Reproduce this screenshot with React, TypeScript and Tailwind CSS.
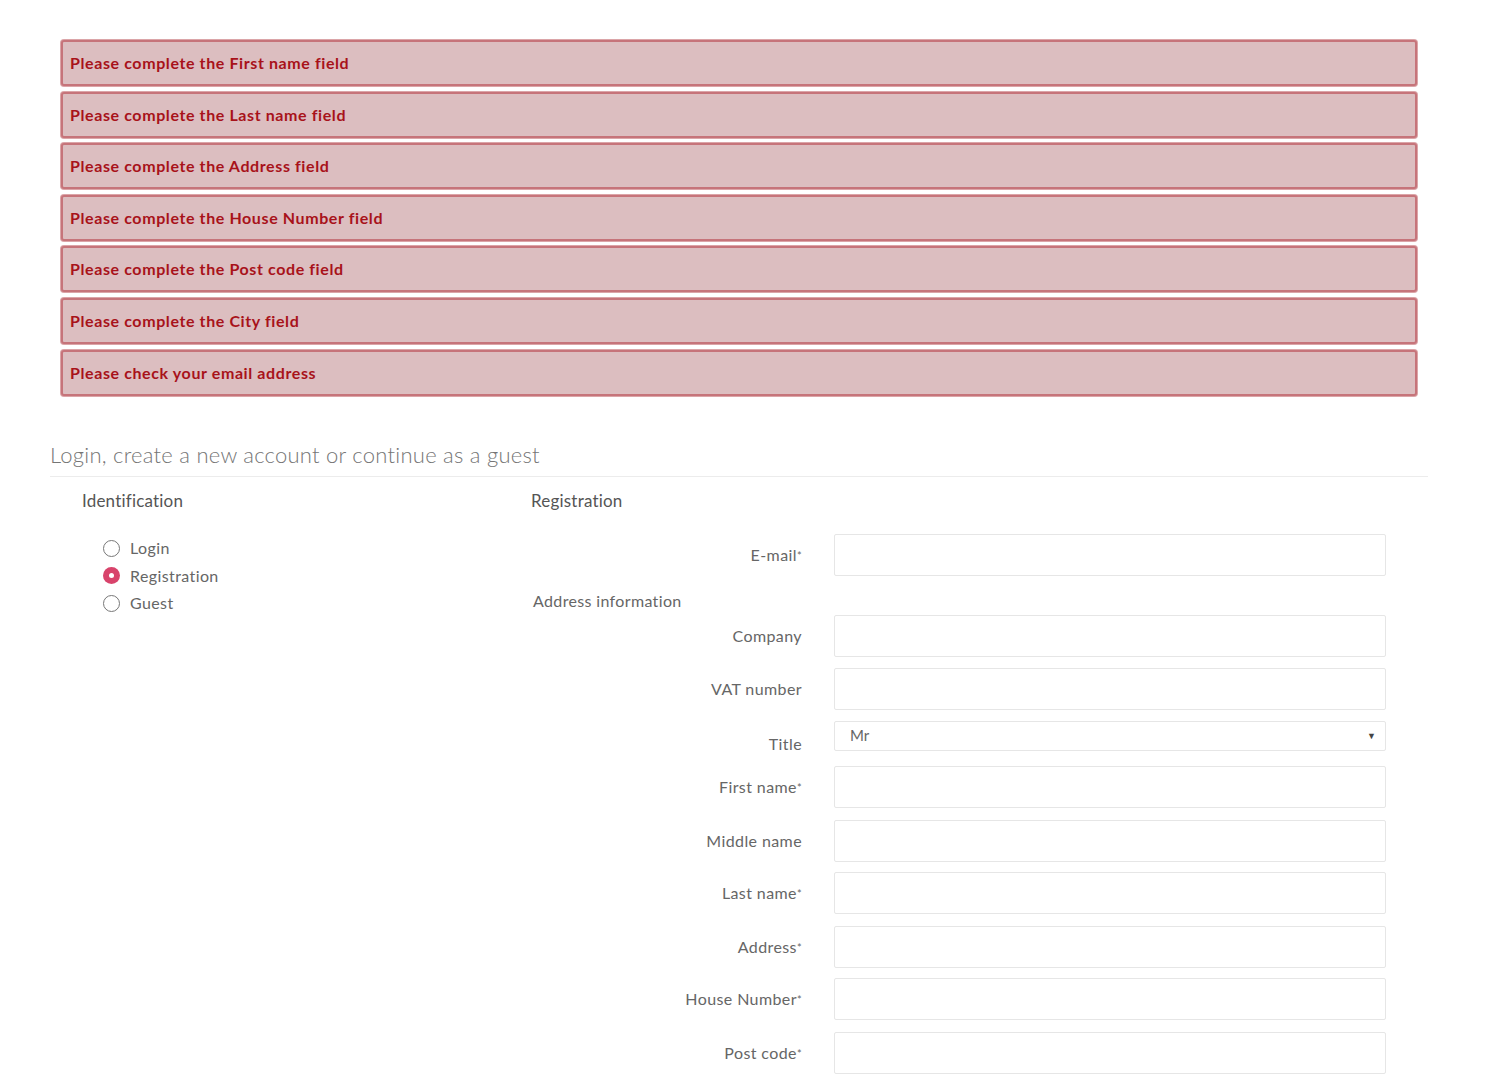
import React from "react";

const errors = [
  "Please complete the First name field",
  "Please complete the Last name field",
  "Please complete the Address field",
  "Please complete the House Number field",
  "Please complete the Post code field",
  "Please complete the City field",
  "Please check your email address",
];

const options = [
  { label: "Login", checked: false },
  { label: "Registration", checked: true },
  { label: "Guest", checked: false },
];

interface FieldRowProps {
  label: string;
  required?: boolean;
  className?: string;
}

const FieldRow = ({ label, required, className }: FieldRowProps) => (
  <div className={`flex items-center ${className ?? ""}`}>
    <label className="w-[271px] text-right text-[16px] tracking-[0.4px] text-[#666]">
      {label}
      {required && <sup className="text-[11px] relative -top-[1px]">*</sup>}
    </label>
    <input
      type="text"
      className="ml-[32px] w-[552px] h-[42px] border border-[#e6e6e6] rounded-[2px] bg-white outline-none"
    />
  </div>
);

const App = () => {
  return (
    <div className="w-[1490px] min-h-[1080px] bg-white font-['Lato','Open_Sans',sans-serif] pt-[40px]">
      <div className="ml-[50px] w-[1378px]">
        <div className="px-[11px]">
          {errors.map((msg) => (
            <div
              key={msg}
              className="h-[46px] mb-[5.6px] flex items-center px-[7px] bg-[#dcbec0] border-2 border-[#c6747a] rounded-[3px] shadow-[0_0_0_1px_#dba5a8]"
            >
              <span className="text-[16px] font-bold tracking-[0.6px] text-[#a8121a]">{msg}</span>
            </div>
          ))}
        </div>

        <h2 className="mt-[44px] text-[22px] leading-[30px] font-light tracking-[0.25px] text-[#757575] pb-[6px] border-b border-[#ececec]">
          Login, create a new account or continue as a guest
        </h2>

        <div className="flex">
          {/* left column: identification choice */}
          <div className="w-[481px] pl-[32px]">
            <h3 className="mt-[12px] text-[17px] leading-[24px] tracking-[0.2px] text-[#555]">Identification</h3>
            <div className="mt-[22px] pl-[21px] flex flex-col">
              {options.map((o) => (
                <div key={o.label} className="flex items-center h-[27.5px]">
                  {o.checked ? (
                    <span className="w-[17px] h-[17px] rounded-full bg-[#d8436b] flex items-center justify-center">
                      <span className="w-[5px] h-[5px] rounded-full bg-white" />
                    </span>
                  ) : (
                    <span className="w-[17px] h-[17px] rounded-full border border-[#777] bg-white" />
                  )}
                  <span className="ml-[10px] text-[16px] tracking-[0.4px] text-[#666]">{o.label}</span>
                </div>
              ))}
            </div>
          </div>

          {/* right column: registration form */}
          <div className="flex-1">
            <h3 className="mt-[12px] text-[17px] leading-[24px] tracking-[0.2px] text-[#555]">Registration</h3>
            <FieldRow label="E-mail" required className="mt-[21px]" />
            <div className="mt-[15px] pl-[2px] text-[16px] leading-[20px] tracking-[0.35px] text-[#666]">
              Address information
            </div>
            <FieldRow label="Company" className="mt-[4px]" />
            <FieldRow label="VAT number" className="mt-[11px]" />
            <div className="flex items-start mt-[11px]">
              <label className="w-[271px] text-right text-[16px] tracking-[0.4px] text-[#666] pt-[11px]">Title</label>
              <div className="ml-[32px] w-[552px] h-[30px] border border-[#e6e6e6] rounded-[2px] flex items-center justify-between pl-[15px] pr-[9px]">
                <span className="text-[15px] text-[#666]">Mr</span>
                <span className="text-[9px] text-[#444]">▼</span>
              </div>
            </div>
            <FieldRow label="First name" required className="mt-[10px]" />
            <FieldRow label="Middle name" className="mt-[12px]" />
            <FieldRow label="Last name" required className="mt-[10px]" />
            <FieldRow label="Address" required className="mt-[12px]" />
            <FieldRow label="House Number" required className="mt-[10px]" />
            <FieldRow label="Post code" required className="mt-[12px]" />
          </div>
        </div>
      </div>
    </div>
  );
};

export default App;
